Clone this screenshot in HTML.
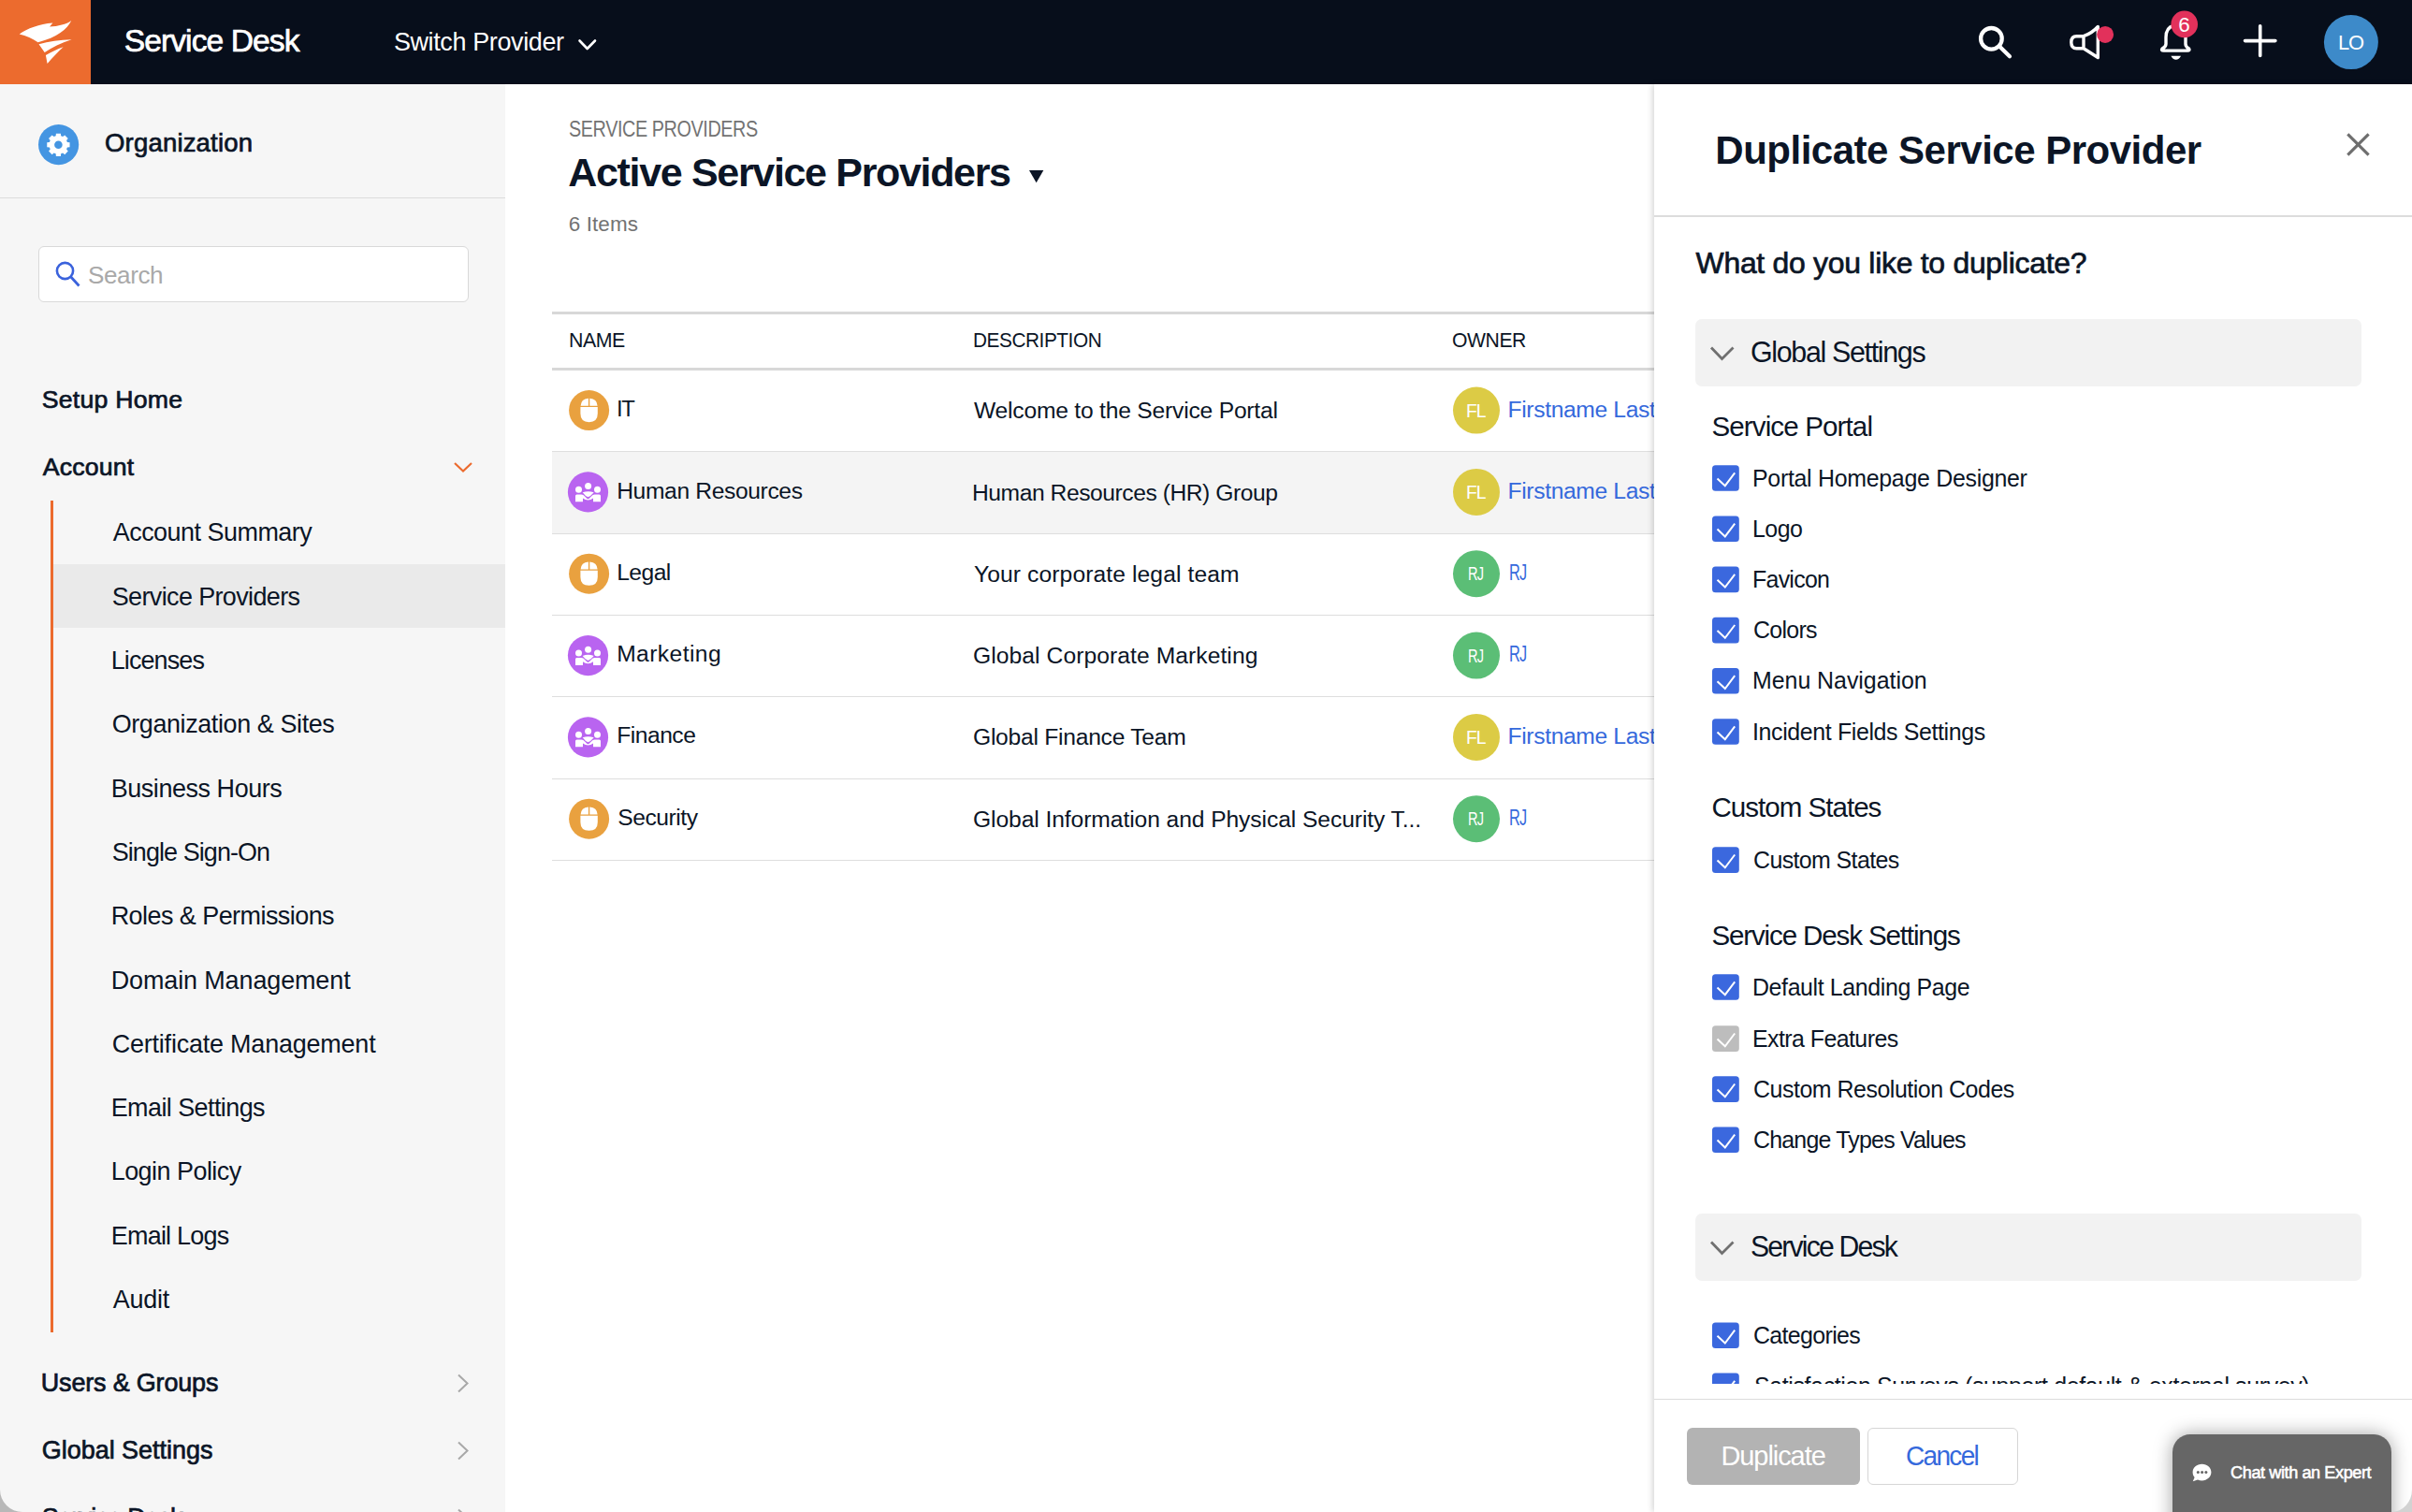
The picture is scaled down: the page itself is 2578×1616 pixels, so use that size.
<!DOCTYPE html>
<html><head><meta charset="utf-8"><title>Service Desk - Duplicate Service Provider</title>
<style>
html,body{margin:0;padding:0;width:2578px;height:1616px;overflow:hidden;background:#fff;}
body{position:relative;font-family:"Liberation Sans",sans-serif;color:#0b1526;}
.a{position:absolute;}
.t{position:absolute;white-space:nowrap;font-family:"Liberation Sans",sans-serif;}
svg.a{overflow:visible;}
</style></head><body>
<!-- header -->
<div class="a" style="left:0;top:0;width:2578px;height:90px;background:#070e1b;"></div>
<div class="a" style="left:0;top:0;width:97px;height:90px;background:#ec6b2e;"></div>
<svg class="a" style="left:0;top:0;" width="2578" height="90" viewBox="0 0 2578 90">
  <g fill="#fff">
    <path d="M20.7,36.5 C29,30.5 42,25.5 56.4,24.5 L53.1,28.6 C62,28 71,26 76.3,22 C72,31 61,40 40.6,45.2 C35,41.5 28,38 20.7,36.5 Z"/>
    <path d="M41.5,47.3 C52,44.5 64,42.6 76.7,42.3 C66,45.8 56,50.5 47.7,56 Z"/>
    <path d="M48.9,58.9 C55,55.5 61,52.5 67.6,50.2 C62,55.5 56,61.5 50.6,68 Z"/>
  </g>
  <path d="M619.5,43.5 L627.7,52 L636,43.5" fill="none" stroke="#fff" stroke-width="2.6" stroke-linecap="round" stroke-linejoin="round"/>
  <!-- search -->
  <circle cx="2128.4" cy="41.3" r="11.3" fill="none" stroke="#fff" stroke-width="4.3"/>
  <path d="M2137,49.5 L2148,60.3" stroke="#fff" stroke-width="4.2" stroke-linecap="round"/>
  <!-- megaphone -->
  <path d="M2227,38.7 L2219.5,38.7 Q2213.8,38.7 2213.8,45.2 Q2213.8,51.8 2219.5,51.8 L2227,51.8 L2242.3,61.5 L2242.3,28.5 Q2236,35.5 2227,38.7 Z M2227,38.7 L2227,51.8" fill="none" stroke="#fff" stroke-width="3.4" stroke-linejoin="round"/>
  <circle cx="2250.1" cy="36.9" r="9" fill="#e2315b"/>
  <!-- bell -->
  <path d="M2315,47 L2315,40 Q2315,29.5 2323,27.5 L2330,27.5 Q2336,29.5 2336,40 L2336,47 Q2336,50 2339.6,52 Q2341,54.1 2338,54.1 L2312.5,54.1 Q2309.5,54.1 2311,52 Q2315,50 2315,47 Z" fill="none" stroke="#fff" stroke-width="3.4" stroke-linejoin="round"/>
  <path d="M2320.4,59.8 L2331,59.8 Q2329,63.7 2325.7,63.7 Q2322.4,63.7 2320.4,59.8 Z" fill="#fff"/>
  <circle cx="2334.7" cy="25.9" r="14.3" fill="#e2315b"/>
  <!-- plus -->
  <path d="M2399.5,43.6 L2431.9,43.6 M2415.7,27.7 L2415.7,59.4" stroke="#fff" stroke-width="3.6" stroke-linecap="round"/>
  <circle cx="2512.9" cy="45.1" r="29" fill="#3d8ac9"/>
</svg>

<!-- sidebar -->
<div class="a" style="left:0;top:90px;width:540px;height:1526px;background:#f6f6f6;"></div>
<div class="a" style="left:0;top:211px;width:540px;height:1px;background:#dcdcdc;"></div>
<div class="a" style="left:41px;top:263px;width:458px;height:58px;background:#fff;border:1px solid #d9d9d9;border-radius:6px;"></div>
<div class="a" style="left:57px;top:603px;width:483px;height:68px;background:#eaeaea;"></div>
<div class="a" style="left:54px;top:535px;width:3px;height:889px;background:#ec6b2e;"></div>
<svg class="a" style="left:0;top:0;" width="540" height="1616" viewBox="0 0 540 1616">
  <circle cx="62.6" cy="154.6" r="21.6" fill="#4495e2"/>
  <g transform="translate(62.4,154.8)">
    <path fill="#fff" fill-rule="evenodd" d="M-2.76,-9.51 L-2.51,-12.14 L2.51,-12.14 L2.76,-9.51 L4.77,-8.68 L6.81,-10.36 L10.36,-6.81 L8.68,-4.77 L9.51,-2.76 L12.14,-2.51 L12.14,2.51 L9.51,2.76 L8.68,4.77 L10.36,6.81 L6.81,10.36 L4.77,8.68 L2.76,9.51 L2.51,12.14 L-2.51,12.14 L-2.76,9.51 L-4.77,8.68 L-6.81,10.36 L-10.36,6.81 L-8.68,4.77 L-9.51,2.76 L-12.14,2.51 L-12.14,-2.51 L-9.51,-2.76 L-8.68,-4.77 L-10.36,-6.81 L-6.81,-10.36 L-4.77,-8.68 Z M4.3,0 A4.3,4.3 0 1 0 -4.3,0 A4.3,4.3 0 1 0 4.3,0 Z"/>
  </g>
  <circle cx="69.5" cy="289.5" r="8.6" fill="none" stroke="#3a62dc" stroke-width="2.6"/>
  <path d="M75.6,295.8 L84.5,305.5" stroke="#3a62dc" stroke-width="2.8" stroke-linecap="butt"/>
  <path d="M486,495 L495,503.5 L504,495" fill="none" stroke="#ec6b2e" stroke-width="2.2"/>
  <path d="M490,1469.5 L499.5,1478.5 L490,1487.5" fill="none" stroke="#a8a8a8" stroke-width="2"/>
  <path d="M490,1541.5 L499.5,1550.5 L490,1559.5" fill="none" stroke="#a8a8a8" stroke-width="2"/>
  <path d="M490,1613.5 L499.5,1622.5 L490,1631.5" fill="none" stroke="#a8a8a8" stroke-width="2"/>
</svg>

<!-- main table -->
<div class="a" style="left:590px;top:333px;width:1200px;height:3px;background:#d8d8d8;"></div>
<div class="a" style="left:590px;top:393px;width:1200px;height:3px;background:#d8d8d8;"></div>
<div class="a" style="left:590px;top:483px;width:1200px;height:87px;background:#f4f4f4;"></div>
<div class="a" style="left:590px;top:482px;width:1200px;height:1px;background:#dedede;"></div>
<div class="a" style="left:590px;top:570px;width:1200px;height:1px;background:#dedede;"></div>
<div class="a" style="left:590px;top:657px;width:1200px;height:1px;background:#dedede;"></div>
<div class="a" style="left:590px;top:744px;width:1200px;height:1px;background:#dedede;"></div>
<div class="a" style="left:590px;top:832px;width:1200px;height:1px;background:#dedede;"></div>
<div class="a" style="left:590px;top:919px;width:1200px;height:1px;background:#dedede;"></div>
<svg class="a" style="left:0;top:0;" width="1800" height="1000" viewBox="0 0 1800 1000">
  <defs>
    <g id="mouse">
      <circle cx="0" cy="0" r="21.5" fill="#e9a13f"/>
      <path d="M-9.2,-3.5 L-9.2,3.5 Q-9.2,12.6 0,12.6 Q9.2,12.6 9.2,3.5 L9.2,-3.5 Z" fill="#fff"/>
      <path d="M-9,-4.8 Q-8.6,-12.2 -0.7,-12.8 L-0.7,-4.8 Z M0.7,-4.8 L0.7,-12.8 Q8.6,-12.2 9,-4.8 Z" fill="#fff"/>
    </g>
    <g id="people">
      <circle cx="0" cy="0" r="21.6" fill="#b964f0"/>
      <g fill="#fff">
        <circle cx="0.1" cy="-6.4" r="3.5"/>
        <circle cx="-10" cy="-2.7" r="3.5"/>
        <circle cx="10" cy="-2.7" r="3.5"/>
        <path d="M-13.5,4 Q-13.5,2.5 -12,2.5 L-7,2.5 Q-5,2.5 -3.5,4.5 Q-1,7.3 0,7.3 Q1,7.3 3.5,4.5 Q5,2.5 7,2.5 L12,2.5 Q13.5,2.5 13.5,4 L13.5,10.3 L5.5,10.3 L5.5,6.6 Q3,8.6 0,8.6 Q-3,8.6 -5.5,6.6 L-5.5,10.3 L-13.5,10.3 Z"/>
        <path d="M-5.8,0.3 Q0,-1.8 6.2,0.3 Q3,4.3 0,5.3 Q-3,4.3 -5.8,0.3 Z"/>
      </g>
    </g>
  </defs>
  <use href="#mouse" x="629.6" y="438.6"/>
  <use href="#people" x="628.5" y="525.9"/>
  <use href="#mouse" x="629.6" y="613.2"/>
  <use href="#people" x="628.5" y="700.6"/>
  <use href="#people" x="628.5" y="787.9"/>
  <use href="#mouse" x="629.6" y="875.2"/>
  <circle cx="1578" cy="438.6" r="25" fill="#dccb45"/>
  <circle cx="1578" cy="525.9" r="25" fill="#dccb45"/>
  <circle cx="1578" cy="613.2" r="25" fill="#5bbe76"/>
  <circle cx="1578" cy="700.6" r="25" fill="#5bbe76"/>
  <circle cx="1578" cy="787.9" r="25" fill="#dccb45"/>
  <circle cx="1578" cy="875.2" r="25" fill="#5bbe76"/>
  <path d="M1100,182 L1115.3,182 L1107.65,195.2 Z" fill="#0b1526"/>
</svg>

<!-- panel -->
<div class="a" style="left:1768px;top:90px;width:810px;height:1526px;background:#fff;box-shadow:-2px 0 6px rgba(0,0,0,0.16);z-index:4;"></div>
<div class="a" style="left:1768px;top:230px;width:810px;height:2px;background:#dcdcdc;z-index:4;"></div>
<div class="a" style="left:1812px;top:341px;width:712px;height:72px;background:#f2f2f2;border-radius:7px;z-index:4;"></div>
<div class="a" style="left:1812px;top:1297px;width:712px;height:72px;background:#f2f2f2;border-radius:7px;z-index:4;"></div>
<div class="a" style="left:1768px;top:1495px;width:810px;height:1px;background:#dcdcdc;z-index:4;"></div>
<div class="a" style="left:1803px;top:1526px;width:185px;height:61px;background:#b3b3b3;border-radius:6px;z-index:4;"></div>
<div class="a" style="left:1996px;top:1526px;width:159px;height:59px;background:#fff;border:1px solid #d6d6d6;border-radius:6px;z-index:4;"></div>
<svg class="a" style="left:0;top:0;z-index:5;" width="2578" height="1616" viewBox="0 0 2578 1616">
  <defs>
    <g id="cb">
      <rect x="0" y="0" width="28.8" height="27.6" rx="3.5" fill="#3b68de"/>
      <path d="M5.5,14.2 L13.8,22 L24.2,8.2" fill="none" stroke="#fff" stroke-width="2"/>
    </g>
    <g id="cbg">
      <rect x="0" y="0" width="28.8" height="27.6" rx="3.5" fill="#bdbdbd"/>
      <path d="M5.5,14.2 L13.8,22 L24.2,8.2" fill="none" stroke="#fff" stroke-width="2"/>
    </g>
    <clipPath id="clipc"><rect x="1768" y="232" width="810" height="1247"/></clipPath>
  </defs>
  <path d="M2509.3,143.4 L2531.6,165.7 M2531.6,143.4 L2509.3,165.7" stroke="#6e6e6e" stroke-width="3.1"/>
  <path d="M1829,371.5 L1840.5,383.5 L1852.5,371.5" fill="none" stroke="#707070" stroke-width="2.8"/>
  <path d="M1829,1327.5 L1840.5,1339.5 L1852.5,1327.5" fill="none" stroke="#707070" stroke-width="2.8"/>
  <use href="#cb" x="1830" y="497.2"/>
  <use href="#cb" x="1830" y="551.4"/>
  <use href="#cb" x="1830" y="605.6"/>
  <use href="#cb" x="1830" y="659.8"/>
  <use href="#cb" x="1830" y="714"/>
  <use href="#cb" x="1830" y="768.2"/>
  <use href="#cb" x="1830" y="905.3"/>
  <use href="#cb" x="1830" y="1041.2"/>
  <use href="#cbg" x="1830" y="1096.3"/>
  <use href="#cb" x="1830" y="1150.3"/>
  <use href="#cb" x="1830" y="1204.4"/>
  <use href="#cb" x="1830" y="1413.5"/>
  <g clip-path="url(#clipc)">
    <use href="#cb" x="1830" y="1467.6"/>
    <text x="1875" y="1490" font-family="Liberation Sans" font-size="24.9" fill="#0b1526" letter-spacing="-0.35">Satisfaction Surveys (support default &amp; external survey)</text>
  </g>
</svg>

<!-- chat widget -->
<div class="a" style="left:2322px;top:1533px;width:234px;height:120px;background:#666;border-radius:19px;box-shadow:0 0 20px rgba(0,0,0,0.36);z-index:8;"></div>
<svg class="a" style="left:0;top:0;z-index:9;" width="2578" height="1616" viewBox="0 0 2578 1616">
  <path d="M2353.5,1564.8 C2359,1564.8 2363.4,1568.6 2363.4,1573.6 C2363.4,1578.6 2359,1582.4 2353.5,1582.4 C2351.8,1582.4 2350.4,1582.1 2349,1581.5 L2343.8,1583.2 L2345.6,1579 C2344.3,1577.6 2343.6,1575.7 2343.6,1573.6 C2343.6,1568.6 2348,1564.8 2353.5,1564.8 Z" fill="#fff"/>
  <circle cx="2349.3" cy="1573.4" r="1.5" fill="#666"/>
  <circle cx="2353.6" cy="1573.4" r="1.5" fill="#666"/>
  <circle cx="2357.9" cy="1573.4" r="1.5" fill="#666"/>
</svg>

<!-- window corners -->
<svg class="a" style="left:0;top:0;z-index:20;" width="2578" height="1616" viewBox="0 0 2578 1616">
  <path d="M0,1592 L0,1616 L24,1616 A24,24 0 0 1 0,1592 Z" fill="#b8b8b8"/>
  <path d="M2578,1592 L2578,1616 L2556,1616 A22,24 0 0 0 2578,1592 Z" fill="#d2d2d2"/>
</svg>

<div class="t" style="left:132.70px;top:25.10px;font-size:33.62px;line-height:37px;color:#fff;letter-spacing:-0.925px;-webkit-text-stroke:0.7px #fff;">Service Desk</div>
<div class="t" style="left:420.90px;top:29.80px;font-size:26.96px;line-height:30px;color:#fff;letter-spacing:-0.368px;">Switch Provider</div>
<div class="t" style="left:2498.82px;top:32.90px;font-size:22.46px;line-height:25px;color:#fff;letter-spacing:-1.348px;transform:scaleX(0.9764);transform-origin:0 0;">LO</div>
<div class="t" style="left:2328.20px;top:14.20px;font-size:22.46px;line-height:25px;color:#fff;">6</div>
<div class="t" style="left:112.00px;top:137.00px;font-size:27.54px;line-height:31px;color:#0b1526;letter-spacing:0.172px;-webkit-text-stroke:0.7px #0b1526;">Organization</div>
<div class="t" style="left:94.00px;top:278.70px;font-size:26.09px;line-height:30px;color:#a9a9a9;letter-spacing:-0.425px;">Search</div>
<div class="t" style="left:44.80px;top:412.20px;font-size:26.67px;line-height:30px;color:#0b1526;letter-spacing:0.228px;-webkit-text-stroke:0.7px #0b1526;">Setup Home</div>
<div class="t" style="left:45.80px;top:484.20px;font-size:26.67px;line-height:30px;color:#0b1526;letter-spacing:0.182px;-webkit-text-stroke:0.7px #0b1526;">Account</div>
<div class="t" style="left:120.70px;top:554.40px;font-size:26.96px;line-height:30px;color:#0b1526;letter-spacing:-0.507px;">Account Summary</div>
<div class="t" style="left:119.70px;top:622.70px;font-size:26.96px;line-height:30px;color:#0b1526;letter-spacing:-0.613px;">Service Providers</div>
<div class="t" style="left:118.70px;top:691.00px;font-size:26.96px;line-height:30px;color:#0b1526;letter-spacing:-0.878px;">Licenses</div>
<div class="t" style="left:119.70px;top:759.30px;font-size:26.96px;line-height:30px;color:#0b1526;letter-spacing:-0.399px;">Organization &amp; Sites</div>
<div class="t" style="left:118.70px;top:827.60px;font-size:26.96px;line-height:30px;color:#0b1526;letter-spacing:-0.436px;">Business Hours</div>
<div class="t" style="left:119.70px;top:895.90px;font-size:26.96px;line-height:30px;color:#0b1526;letter-spacing:-0.916px;">Single Sign-On</div>
<div class="t" style="left:118.70px;top:964.20px;font-size:26.96px;line-height:30px;color:#0b1526;letter-spacing:-0.541px;">Roles &amp; Permissions</div>
<div class="t" style="left:118.70px;top:1032.50px;font-size:26.96px;line-height:30px;color:#0b1526;letter-spacing:-0.110px;">Domain Management</div>
<div class="t" style="left:119.70px;top:1100.80px;font-size:26.96px;line-height:30px;color:#0b1526;letter-spacing:-0.200px;">Certificate Management</div>
<div class="t" style="left:118.70px;top:1169.10px;font-size:26.96px;line-height:30px;color:#0b1526;letter-spacing:-0.570px;">Email Settings</div>
<div class="t" style="left:118.70px;top:1237.40px;font-size:26.96px;line-height:30px;color:#0b1526;letter-spacing:-0.526px;">Login Policy</div>
<div class="t" style="left:118.70px;top:1305.70px;font-size:26.96px;line-height:30px;color:#0b1526;letter-spacing:-0.743px;">Email Logs</div>
<div class="t" style="left:120.70px;top:1374.00px;font-size:26.96px;line-height:30px;color:#0b1526;letter-spacing:-0.229px;">Audit</div>
<div class="t" style="left:43.80px;top:1463.00px;font-size:26.96px;line-height:30px;color:#0b1526;letter-spacing:-0.165px;-webkit-text-stroke:0.7px #0b1526;">Users &amp; Groups</div>
<div class="t" style="left:44.80px;top:1535.00px;font-size:26.96px;line-height:30px;color:#0b1526;letter-spacing:-0.015px;-webkit-text-stroke:0.7px #0b1526;">Global Settings</div>
<div class="t" style="left:44.80px;top:1607.00px;font-size:26.96px;line-height:30px;color:#0b1526;letter-spacing:-0.746px;-webkit-text-stroke:0.7px #0b1526;">Service Desk</div>
<div class="t" style="left:608.25px;top:125.00px;font-size:23.19px;line-height:26px;color:#737373;letter-spacing:-0.464px;transform:scaleX(0.8532);transform-origin:0 0;">SERVICE PROVIDERS</div>
<div class="t" style="left:607.30px;top:159.80px;font-size:43.04px;line-height:48px;color:#0b1526;font-weight:700;letter-spacing:-1.347px;">Active Service Providers</div>
<div class="t" style="left:607.80px;top:226.80px;font-size:22.46px;line-height:25px;color:#737373;letter-spacing:0.085px;">6 Items</div>
<div class="t" style="left:608.36px;top:350.80px;font-size:22.61px;line-height:25px;color:#0b1526;letter-spacing:-0.452px;transform:scaleX(0.9435);transform-origin:0 0;">NAME</div>
<div class="t" style="left:1039.88px;top:350.80px;font-size:22.61px;line-height:25px;color:#0b1526;letter-spacing:-0.452px;transform:scaleX(0.9175);transform-origin:0 0;">DESCRIPTION</div>
<div class="t" style="left:1551.56px;top:350.80px;font-size:22.61px;line-height:25px;color:#0b1526;letter-spacing:-0.452px;transform:scaleX(0.9356);transform-origin:0 0;">OWNER</div>
<div class="t" style="left:659.26px;top:423.20px;font-size:24.64px;line-height:27px;color:#0b1526;letter-spacing:-1.478px;transform:scaleX(0.9693);transform-origin:0 0;">IT</div>
<div class="t" style="left:1041.00px;top:425.20px;font-size:24.64px;line-height:27px;color:#0b1526;letter-spacing:-0.207px;">Welcome to the Service Portal</div>
<div class="t" style="left:1566.65px;top:427.70px;font-size:20.29px;line-height:22px;color:#fff;letter-spacing:-1.217px;transform:scaleX(0.9546);transform-origin:0 0;">FL</div>
<div class="t" style="left:1611.50px;top:424.00px;font-size:24.64px;line-height:27px;color:#3569dc;letter-spacing:-0.347px;">Firstname Lastname</div>
<div class="t" style="left:659.20px;top:510.52px;font-size:24.64px;line-height:27px;color:#0b1526;letter-spacing:-0.365px;">Human Resources</div>
<div class="t" style="left:1039.00px;top:512.52px;font-size:24.64px;line-height:27px;color:#0b1526;letter-spacing:-0.445px;">Human Resources (HR) Group</div>
<div class="t" style="left:1566.65px;top:515.02px;font-size:20.29px;line-height:22px;color:#fff;letter-spacing:-1.217px;transform:scaleX(0.9546);transform-origin:0 0;">FL</div>
<div class="t" style="left:1611.50px;top:511.32px;font-size:24.64px;line-height:27px;color:#3569dc;letter-spacing:-0.347px;">Firstname Lastname</div>
<div class="t" style="left:659.20px;top:597.84px;font-size:24.64px;line-height:27px;color:#0b1526;letter-spacing:-0.545px;">Legal</div>
<div class="t" style="left:1041.00px;top:599.84px;font-size:24.64px;line-height:27px;color:#0b1526;letter-spacing:0.101px;">Your corporate legal team</div>
<div class="t" style="left:1569.18px;top:602.34px;font-size:20.29px;line-height:22px;color:#fff;letter-spacing:-1.217px;transform:scaleX(0.7190);transform-origin:0 0;">RJ</div>
<div class="t" style="left:1612.66px;top:598.14px;font-size:24.35px;line-height:27px;color:#3569dc;letter-spacing:-1.217px;transform:scaleX(0.6706);transform-origin:0 0;">RJ</div>
<div class="t" style="left:659.20px;top:685.16px;font-size:24.64px;line-height:27px;color:#0b1526;letter-spacing:0.422px;">Marketing</div>
<div class="t" style="left:1040.00px;top:687.16px;font-size:24.64px;line-height:27px;color:#0b1526;letter-spacing:0.076px;">Global Corporate Marketing</div>
<div class="t" style="left:1569.18px;top:689.66px;font-size:20.29px;line-height:22px;color:#fff;letter-spacing:-1.217px;transform:scaleX(0.7190);transform-origin:0 0;">RJ</div>
<div class="t" style="left:1612.66px;top:685.46px;font-size:24.35px;line-height:27px;color:#3569dc;letter-spacing:-1.217px;transform:scaleX(0.6706);transform-origin:0 0;">RJ</div>
<div class="t" style="left:659.20px;top:772.48px;font-size:24.64px;line-height:27px;color:#0b1526;letter-spacing:-0.485px;">Finance</div>
<div class="t" style="left:1040.00px;top:774.48px;font-size:24.64px;line-height:27px;color:#0b1526;letter-spacing:-0.254px;">Global Finance Team</div>
<div class="t" style="left:1566.65px;top:776.98px;font-size:20.29px;line-height:22px;color:#fff;letter-spacing:-1.217px;transform:scaleX(0.9546);transform-origin:0 0;">FL</div>
<div class="t" style="left:1611.50px;top:773.28px;font-size:24.64px;line-height:27px;color:#3569dc;letter-spacing:-0.347px;">Firstname Lastname</div>
<div class="t" style="left:660.20px;top:859.80px;font-size:24.64px;line-height:27px;color:#0b1526;letter-spacing:-0.449px;">Security</div>
<div class="t" style="left:1040.00px;top:861.80px;font-size:24.64px;line-height:27px;color:#0b1526;letter-spacing:-0.080px;">Global Information and Physical Security T...</div>
<div class="t" style="left:1569.18px;top:864.30px;font-size:20.29px;line-height:22px;color:#fff;letter-spacing:-1.217px;transform:scaleX(0.7190);transform-origin:0 0;">RJ</div>
<div class="t" style="left:1612.66px;top:860.10px;font-size:24.35px;line-height:27px;color:#3569dc;letter-spacing:-1.217px;transform:scaleX(0.6706);transform-origin:0 0;">RJ</div>
<div class="t" style="left:1833.30px;top:136.80px;font-size:42.03px;line-height:47px;color:#0b1526;font-weight:700;letter-spacing:-0.503px;z-index:5;">Duplicate Service Provider</div>
<div class="t" style="left:1812.60px;top:262.80px;font-size:31.88px;line-height:36px;color:#0b1526;letter-spacing:-0.256px;-webkit-text-stroke:0.7px #0b1526;z-index:5;">What do you like to duplicate?</div>
<div class="t" style="left:1871.00px;top:359.40px;font-size:30.43px;line-height:34px;color:#0b1526;letter-spacing:-1.336px;z-index:5;">Global Settings</div>
<div class="t" style="left:1829.40px;top:438.50px;font-size:29.57px;line-height:33px;color:#0b1526;letter-spacing:-0.881px;z-index:5;">Service Portal</div>
<div class="t" style="left:1829.40px;top:846.20px;font-size:29.57px;line-height:33px;color:#0b1526;letter-spacing:-0.992px;z-index:5;">Custom States</div>
<div class="t" style="left:1829.40px;top:982.60px;font-size:29.57px;line-height:33px;color:#0b1526;letter-spacing:-1.142px;z-index:5;">Service Desk Settings</div>
<div class="t" style="left:1871.01px;top:1315.30px;font-size:30.43px;line-height:34px;color:#0b1526;letter-spacing:-1.826px;z-index:5;transform:scaleX(0.9918);transform-origin:0 0;">Service Desk</div>
<div class="t" style="left:1873.00px;top:496.50px;font-size:24.93px;line-height:28px;color:#0b1526;letter-spacing:-0.292px;z-index:5;">Portal Homepage Designer</div>
<div class="t" style="left:1873.00px;top:550.70px;font-size:24.93px;line-height:28px;color:#0b1526;letter-spacing:-0.518px;z-index:5;">Logo</div>
<div class="t" style="left:1873.00px;top:604.90px;font-size:24.93px;line-height:28px;color:#0b1526;letter-spacing:-0.726px;z-index:5;">Favicon</div>
<div class="t" style="left:1874.00px;top:659.10px;font-size:24.93px;line-height:28px;color:#0b1526;letter-spacing:-0.703px;z-index:5;">Colors</div>
<div class="t" style="left:1873.00px;top:713.30px;font-size:24.93px;line-height:28px;color:#0b1526;letter-spacing:-0.032px;z-index:5;">Menu Navigation</div>
<div class="t" style="left:1873.00px;top:767.50px;font-size:24.93px;line-height:28px;color:#0b1526;letter-spacing:-0.367px;z-index:5;">Incident Fields Settings</div>
<div class="t" style="left:1874.00px;top:904.60px;font-size:24.93px;line-height:28px;color:#0b1526;letter-spacing:-0.599px;z-index:5;">Custom States</div>
<div class="t" style="left:1873.00px;top:1040.50px;font-size:24.93px;line-height:28px;color:#0b1526;letter-spacing:-0.380px;z-index:5;">Default Landing Page</div>
<div class="t" style="left:1873.00px;top:1095.60px;font-size:24.93px;line-height:28px;color:#0b1526;letter-spacing:-0.560px;z-index:5;">Extra Features</div>
<div class="t" style="left:1874.00px;top:1149.60px;font-size:24.93px;line-height:28px;color:#0b1526;letter-spacing:-0.467px;z-index:5;">Custom Resolution Codes</div>
<div class="t" style="left:1874.00px;top:1203.70px;font-size:24.93px;line-height:28px;color:#0b1526;letter-spacing:-0.782px;z-index:5;">Change Types Values</div>
<div class="t" style="left:1874.00px;top:1412.80px;font-size:24.93px;line-height:28px;color:#0b1526;letter-spacing:-0.644px;z-index:5;">Categories</div>
<div class="t" style="left:1839.40px;top:1540.40px;font-size:28.99px;line-height:32px;color:#fff;letter-spacing:-1.057px;z-index:6;">Duplicate</div>
<div class="t" style="left:2037.03px;top:1540.40px;font-size:28.99px;line-height:32px;color:#3569dc;letter-spacing:-1.739px;z-index:6;transform:scaleX(0.9666);transform-origin:0 0;">Cancel</div>
<div class="t" style="left:2384.10px;top:1563.80px;font-size:18.12px;line-height:20px;color:#fff;letter-spacing:-0.417px;-webkit-text-stroke:0.55px #fff;z-index:9;">Chat with an Expert</div>
</body></html>
